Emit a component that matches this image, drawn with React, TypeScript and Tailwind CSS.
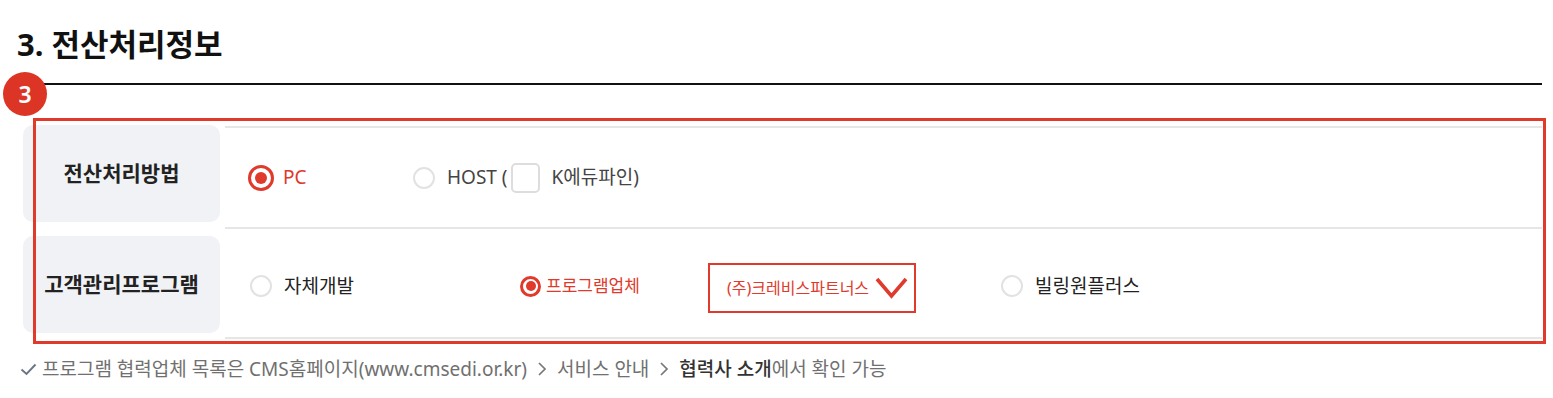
const font = { fontFamily: '"Noto Sans", "Noto Sans CJK KR", sans-serif' };

function Radio({ checked, size = 22 }: { checked?: boolean; size?: number }) {
    if (checked) {
        return (
            <span
                className={`flex shrink-0 items-center justify-center rounded-full border-[3px] border-[#e03a2c] bg-white ${size > 24 ? 'w-[26px] h-[26px]' : 'w-[21px] h-[21px]'}`}
            >
                <span className={`rounded-full bg-[#e03a2c] ${size > 24 ? 'w-[12px] h-[12px]' : 'w-[10px] h-[10px]'}`} />
            </span>
        );
    }
    return <span className="shrink-0 w-[22px] h-[22px] rounded-full border-2 border-[#e2e2e2] bg-white" />;
}

function Chevron() {
    return (
        <svg width="10" height="16" viewBox="0 0 10 16" className="mx-[10px] shrink-0">
            <path d="M2 2 L8 8 L2 14" fill="none" stroke="#777" strokeWidth="1.7" />
        </svg>
    );
}

export default function App() {
    return (
        <div className="relative w-[1553px] h-[398px] bg-white text-[#222] overflow-hidden" style={font}>
            <h2 className="pt-[26px] pl-[17px] text-[31px] leading-[36px] font-bold text-[#111]">3. 전산처리정보</h2>
            <div className="mt-[21px] ml-[17px] w-[1525px] h-[2px] bg-[#111]" />

            {/* step badge */}
            <div className="absolute left-[3px] top-[72px] w-[44px] h-[44px] rounded-full bg-[#dc3526] flex items-center justify-center text-white text-[23px] font-semibold">
                3
            </div>

            <div className="mt-[40px] ml-[23px] w-[1519px]">
                {/* row 1 */}
                <div className="flex h-[104px]">
                    <div className="w-[197px] h-[97px] shrink-0 rounded-[10px] bg-[#f1f2f6] flex items-center justify-center text-[21px] font-semibold">
                        전산처리방법
                    </div>
                    <div className="ml-[5px] mt-[1px] flex-1 h-[103px] border-t-2 border-b-2 border-[#e6e6e6] flex items-center pl-[23px] text-[19px]">
                        <div className="flex items-center w-[165px]">
                            <Radio checked size={26} />
                            <span className="ml-[9px] text-[#e03a2c]">PC</span>
                        </div>
                        <div className="flex items-center text-[#444]">
                            <Radio />
                            <span className="ml-[12px]">HOST (</span>
                            <span className="ml-[3px] w-[29px] h-[30px] rounded-[5px] border-2 border-[#dddddd]" />
                            <span className="ml-[12px]">K에듀파인)</span>
                        </div>
                    </div>
                </div>

                {/* row 2 */}
                <div className="flex h-[110px]">
                    <div className="mt-[7px] w-[197px] h-[97px] shrink-0 rounded-[10px] bg-[#f1f2f6] flex items-center justify-center text-[21px] font-semibold">
                        고객관리프로그램
                    </div>
                    <div className="ml-[5px] flex-1 h-[110px] border-b-2 border-[#e6e6e6] flex items-center pl-[25px] pt-[6px] text-[19px]">
                        <div className="flex items-center w-[270px]">
                            <Radio />
                            <span className="ml-[12px]">자체개발</span>
                        </div>
                        <div className="flex items-center w-[188px]">
                            <Radio checked />
                            <span className="ml-[5px] text-[#e03a2c] text-[17px]">프로그램업체</span>
                        </div>
                        <div className="mt-[4px] w-[208px] h-[50px] shrink-0 border-2 border-[#e03a2c] flex items-center pl-[17px] text-[#e03a2c] text-[16px]">
                            <span>(주)크레비스파트너스</span>
                            <svg width="34" height="22" viewBox="0 0 34 22" className="ml-[6px]">
                                <path d="M2 2 L16.5 19 L31 2" fill="none" stroke="#e03a2c" strokeWidth="3.6" />
                            </svg>
                        </div>
                        <div className="flex items-center ml-[85px]">
                            <Radio />
                            <span className="ml-[12px]">빌링원플러스</span>
                        </div>
                    </div>
                </div>
            </div>

            {/* annotation frame */}
            <div className="absolute left-[33px] top-[118px] w-[1513px] h-[226px] border-[3px] border-[#e03a2c]" />

            <div className="mt-[16px] ml-[20px] flex items-center text-[19px] text-[#707070]">
                <svg width="17" height="13" viewBox="0 0 17 13" className="mr-[5px]">
                    <path d="M1.5 6.5 L6.5 11 L15.5 1.5" fill="none" stroke="#6b7487" strokeWidth="1.9" />
                </svg>
                <span>프로그램 협력업체 목록은 CMS홈페이지(www.cmsedi.or.kr)</span>
                <Chevron />
                <span>서비스 안내</span>
                <Chevron />
                <span className="text-[#333] font-medium">협력사 소개</span>
                <span>에서 확인 가능</span>
            </div>
        </div>
    );
}
